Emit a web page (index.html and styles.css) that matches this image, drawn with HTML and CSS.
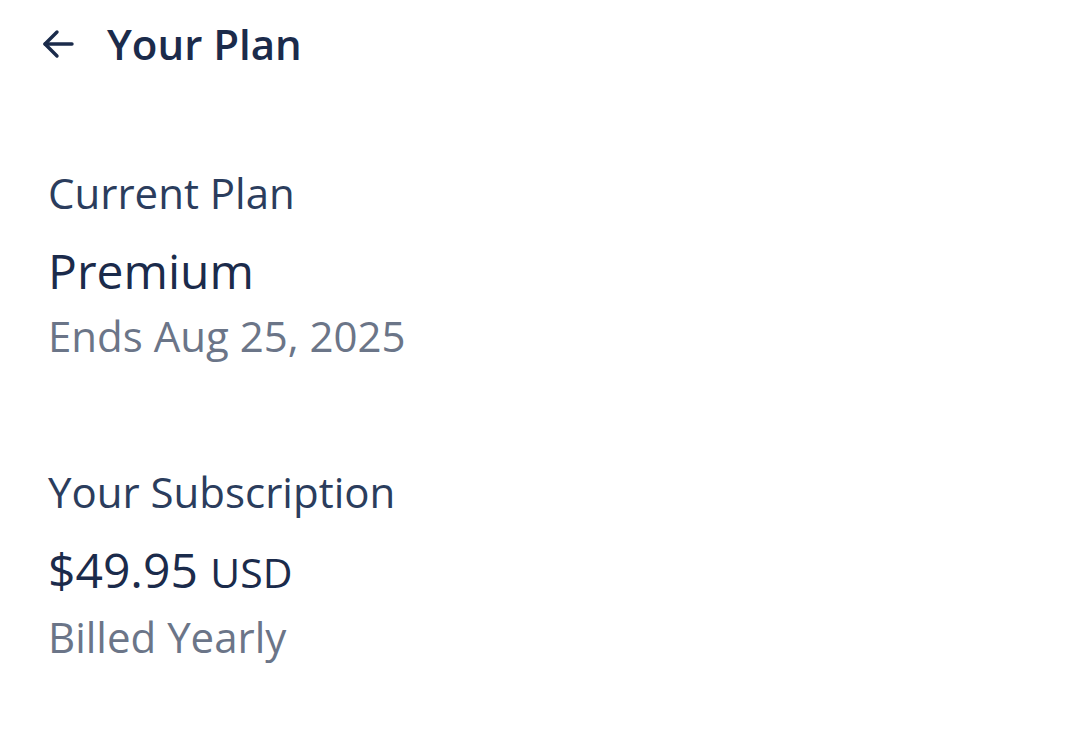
FILE: index.html
```html
<!DOCTYPE html>
<html lang="en">
<head>
    <meta charset="UTF-8">
    <meta name="viewport" content="width=device-width, initial-scale=1.0">
    <title>Your Plan</title>
    <link rel="stylesheet" href="styles.css">
</head>
<body>
    <header class="top-bar">
        <button class="back-btn" type="button" aria-label="Back">
            <svg width="32" height="30" viewBox="0 0 32 30" fill="none" stroke="currentColor" stroke-width="3.4" stroke-linecap="round" stroke-linejoin="round">
                <path d="M3 15H30"/>
                <path d="M15 3L3 15l12 12"/>
            </svg>
        </button>
        <h1 class="title">Your Plan</h1>
    </header>

    <section class="block">
        <div class="label">Current Plan</div>
        <div class="value">Premium</div>
        <div class="note">Ends Aug 25, 2025</div>
    </section>

    <section class="block">
        <div class="label">Your Subscription</div>
        <div class="value">$49.95 <span class="currency">USD</span></div>
        <div class="note">Billed Yearly</div>
    </section>
</body>
</html>
```

FILE: styles.css
```css
body {
    margin: 0;
    background: #ffffff;
    font-family: "Open Sans", "Noto Sans", sans-serif;
    color: #1b2b4b;
}
.top-bar {
    display: flex;
    align-items: center;
    gap: 33px;
    padding: 16px 0 0 42px;
}
.back-btn {
    background: none;
    border: none;
    padding: 0;
    color: #1b2b4b;
    display: flex;
}
.title {
    margin: 0;
    font-size: 42px;
    line-height: 56px;
    font-weight: 600;
    color: #1b2b4b;
}
.block {
    padding: 0 48px;
    margin-top: 93px;
}
.block + .block {
    margin-top: 100px;
}
.label {
    font-size: 42px;
    line-height: 56px;
    color: #2b3d5d;
}
.value {
    font-size: 48px;
    line-height: 64px;
    margin-top: 18px;
    color: #1b2b4b;
}
.currency {
    font-size: 41px;
}
.note {
    font-size: 42px;
    line-height: 56px;
    margin-top: 5px;
    color: #6b7588;
}
```
